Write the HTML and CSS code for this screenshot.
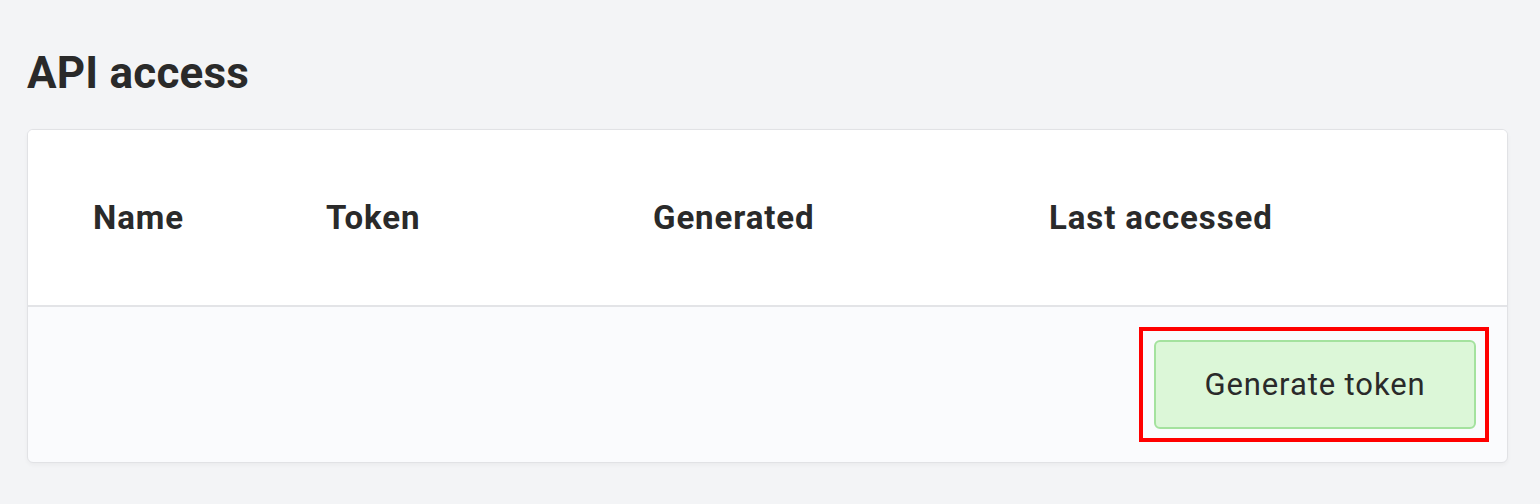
FILE: index.html
```html
<!DOCTYPE html>
<html>
<head>
<meta charset="utf-8">
<link rel="stylesheet" href="styles.css">
</head>
<body>
<main class="page">
  <h1 class="title">API access</h1>
  <section class="card">
    <div class="table-head">
      <div class="th">Name</div>
      <div class="th">Token</div>
      <div class="th">Generated</div>
      <div class="th">Last accessed</div>
    </div>
    <div class="card-footer">
      <div class="highlight">
        <button class="btn">Generate token</button>
      </div>
    </div>
  </section>
</main>
</body>
</html>
```

FILE: styles.css
```css
html, body {
  margin: 0;
  padding: 0;
  background: #f3f4f6;
}
body {
  font-family: Roboto, "Noto Sans", sans-serif;
  color: #2a2a2a;
}
.page {
  padding: 47px 32px 41px 27px;
}
.title {
  margin: 0 0 30px 0;
  font-size: 44px;
  line-height: 52px;
  font-weight: 700;
  letter-spacing: 0.2px;
}
.card {
  background: #fafbfd;
  border: 1px solid #e1e2e5;
  border-radius: 6px;
  box-shadow: 0 2px 4px rgba(0,0,0,0.04);
  overflow: hidden;
}
.table-head {
  display: grid;
  grid-template-columns: 233px 327px 396px 1fr;
  align-items: center;
  height: 175px;
  padding-left: 65px;
  background: #ffffff;
  border-bottom: 2px solid #e3e4e7;
}
.th {
  font-size: 33px;
  line-height: 40px;
  font-weight: 700;
  letter-spacing: 0.9px;
}
.card-footer {
  display: flex;
  justify-content: flex-end;
  padding: 20px 18px 20px 0;
}
.highlight {
  border: 4px solid #ff0000;
  padding: 9px 9px 9px 11px;
}
.btn {
  display: block;
  width: 322px;
  height: 89px;
  background: #dcf7d8;
  border: 2px solid #a4e29e;
  border-radius: 6px;
  font-family: Roboto, "Noto Sans", sans-serif;
  font-size: 31px;
  font-weight: 400;
  color: #2a2a2a;
  letter-spacing: 0.9px;
  padding: 0;
}
```
